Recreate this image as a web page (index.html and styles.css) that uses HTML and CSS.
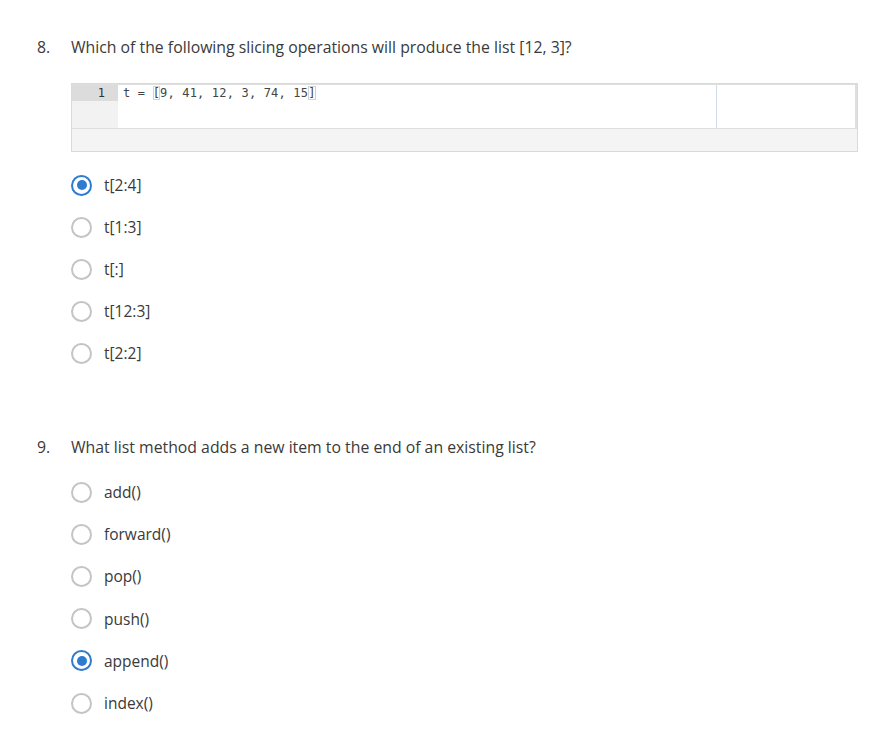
FILE: index.html
```html
<!DOCTYPE html>
<html>
<head>
<meta charset="utf-8">
<link rel="stylesheet" href="styles.css">
</head>
<body>
<div class="page">
  <section class="question q8">
    <div class="title"><span class="num">8.</span><span class="text">Which of the following slicing operations will produce the list [12, 3]?</span></div>
    <div class="editor">
      <div class="code">
        <div class="gutter">
          <div class="ln active">1</div>
        </div>
        <div class="lines">
          <div class="line">t = <span class="br">[</span>9, 41, 12, 3, 74, 15<span class="br">]</span></div>
          <div class="margin-line"></div>
        </div>
      </div>
      <div class="footer"></div>
    </div>
    <ul class="options">
      <li><span class="radio checked"></span><span>t[2:4]</span></li>
      <li><span class="radio"></span><span>t[1:3]</span></li>
      <li><span class="radio"></span><span>t[:]</span></li>
      <li><span class="radio"></span><span>t[12:3]</span></li>
      <li><span class="radio"></span><span>t[2:2]</span></li>
    </ul>
  </section>
  <section class="question q9">
    <div class="title"><span class="num">9.</span><span class="text">What list method adds a new item to the end of an existing list?</span></div>
    <ul class="options">
      <li><span class="radio"></span><span>add()</span></li>
      <li><span class="radio"></span><span>forward()</span></li>
      <li><span class="radio"></span><span>pop()</span></li>
      <li><span class="radio"></span><span>push()</span></li>
      <li><span class="radio checked"></span><span>append()</span></li>
      <li><span class="radio"></span><span>index()</span></li>
    </ul>
  </section>
</div>
</body>
</html>
```
FILE: styles.css
```css
html, body {
  margin: 0;
  padding: 0;
  background: #fff;
}
body {
  font-family: "Open Sans", "Liberation Sans", sans-serif;
  color: #3a3a3a;
}
.page {
  padding: 35px 33px 0 37px;
}
.title {
  display: flex;
  font-size: 15.8px;
  line-height: 24px;
}
.num {
  width: 34px;
  flex: none;
}
.q9 {
  margin-top: 61px;
}
.editor {
  margin: 24px 0 0 34px;
  border: 1px solid #dadada;
  background: #f4f4f4;
}
.code {
  display: flex;
  height: 43px;
  background: #fff;
  border-top: 1px solid #dedede;
  border-right: 2px solid #dedede;
  border-bottom: 1px solid #dedede;
}
.gutter {
  width: 46px;
  background: #f2f2f2;
  flex: none;
}
.ln {
  font-family: "DejaVu Sans Mono", "Liberation Mono", monospace;
  font-size: 12px;
  line-height: 16px;
  height: 16px;
  text-align: right;
  padding-right: 13px;
  color: #333;
}
.ln.active {
  background: #dcdcdc;
}
.lines {
  position: relative;
  flex: 1;
  padding-left: 5px;
}
.line {
  font-family: "DejaVu Sans Mono", "Liberation Mono", monospace;
  font-size: 12px;
  letter-spacing: 0.18px;
  line-height: 16px;
  color: #444;
}
.br {
  outline: 1px solid #d2d2d2;
  outline-offset: -1px;
}
.margin-line {
  position: absolute;
  top: 0;
  bottom: 0;
  left: 598px;
  width: 1px;
  background: #cfdbe6;
}
.footer {
  height: 22px;
}
.options {
  list-style: none;
  margin: 12px 0 0 34px;
  padding: 0;
}
.options li {
  height: 42px;
  display: flex;
  align-items: center;
  font-size: 15.5px;
  color: #3a3a3a;
}
.q9 .options li {
  height: 42.2px;
}
.radio {
  box-sizing: border-box;
  width: 21px;
  height: 21px;
  border: 2px solid #c4c4c4;
  border-radius: 50%;
  margin-right: 12px;
  flex: none;
  position: relative;
  background: #fff;
}
.radio.checked {
  border: 2.5px solid #2e7bd1;
}
.radio.checked::after {
  content: "";
  position: absolute;
  left: 50%;
  top: 50%;
  width: 10px;
  height: 10px;
  margin: -5px 0 0 -5px;
  border-radius: 50%;
  background: #2e7bd1;
}
```
